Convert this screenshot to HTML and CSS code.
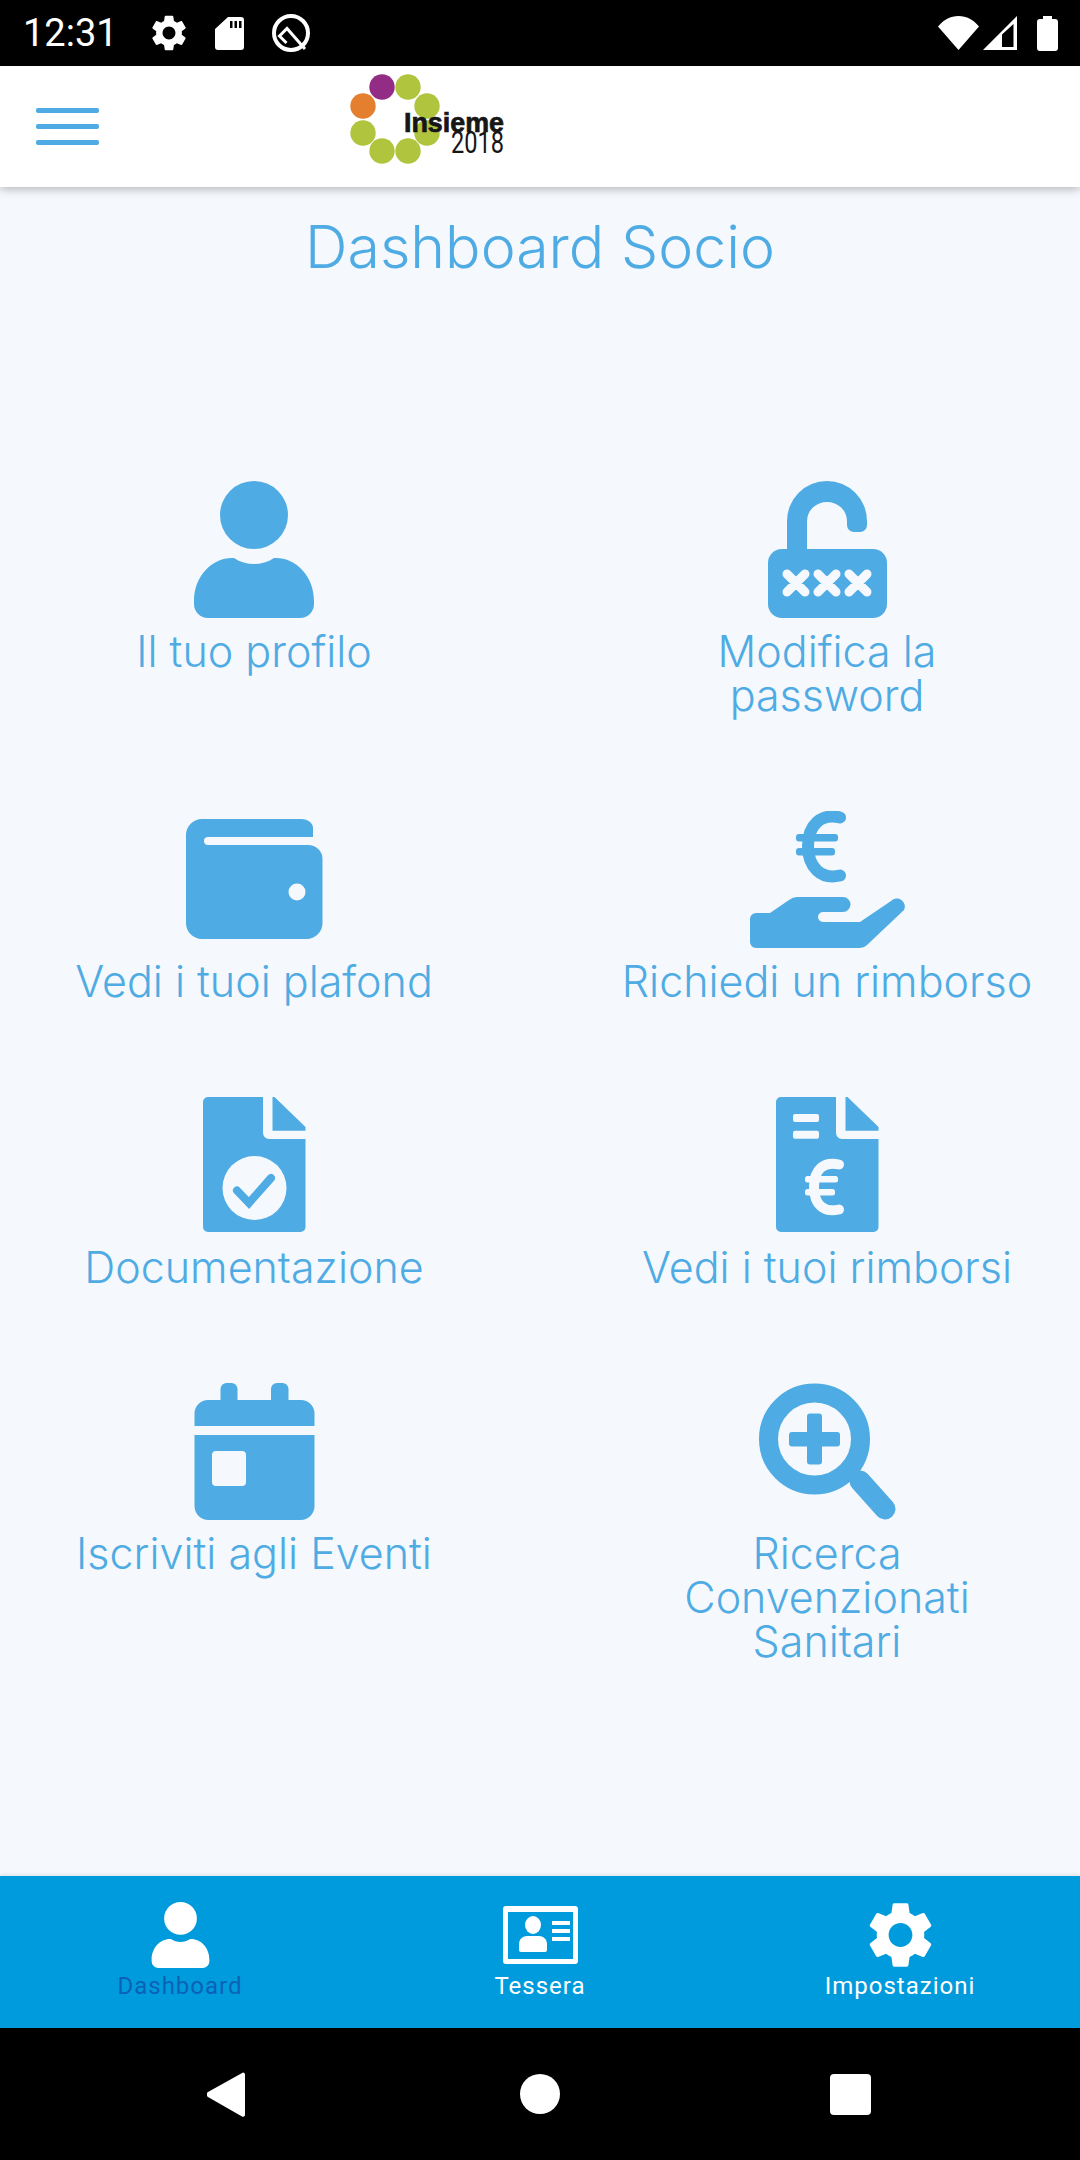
FILE: index.html
```html
<!DOCTYPE html>
<html lang="it">
<head>
    <meta charset="UTF-8">
    <meta name="viewport" content="width=device-width, initial-scale=1.0">
    <title>Dashboard Socio</title>
    <link rel="stylesheet" href="styles.css">
</head>
<body>
    <div class="telefono">
        <div class="barra-stato">
            <span class="ora">12:31</span>
            <svg class="st-gear" viewBox="2.5 2 19 20"><path fill="#fff" d="M19.14 12.94c.04-.3.06-.61.06-.94 0-.32-.02-.64-.07-.94l2.03-1.58c.18-.14.23-.41.12-.61l-1.92-3.32c-.12-.22-.37-.29-.59-.22l-2.39.96c-.5-.38-1.03-.7-1.62-.94l-.36-2.54c-.04-.24-.24-.41-.48-.41h-3.84c-.24 0-.43.17-.47.41l-.36 2.54c-.59.24-1.13.57-1.62.94l-2.39-.96c-.22-.08-.47 0-.59.22L2.74 8.87c-.12.21-.08.47.12.61l2.03 1.58c-.05.3-.09.63-.09.94s.02.64.07.94l-2.03 1.58c-.18.14-.23.41-.12.61l1.92 3.32c.12.22.37.29.59.22l2.39-.96c.5.38 1.03.7 1.62.94l.36 2.54c.05.24.24.41.48.41h3.84c.24 0 .44-.17.47-.41l.36-2.54c.59-.24 1.13-.56 1.62-.94l2.39.96c.22.08.47 0 .59-.22l1.92-3.32c.12-.22.07-.47-.12-.61l-2.01-1.58zM12 15.6c-1.98 0-3.6-1.62-3.6-3.6s1.62-3.6 3.6-3.6 3.6 1.62 3.6 3.6-1.62 3.6-3.6 3.6z"/></svg>
            <svg class="st-sd" viewBox="0 0 29 33"><path fill="#fff" fill-rule="evenodd" d="M13 0H26a3 3 0 0 1 3 3V30a3 3 0 0 1-3 3H3a3 3 0 0 1-3-3V12zM15 4v7h2.500V4zM19.500 4v7h2.500V4zM24 4v7h2.500V4z"/></svg>
            <svg class="st-q" viewBox="0 0 38 38"><circle cx="19" cy="19" r="17" fill="none" stroke="#fff" stroke-width="4"/><path fill="none" stroke="#fff" stroke-width="3" d="M14.500 29L7.500 22 15 14.500 33 35"/></svg>
            <div class="stato-destra">
                <svg class="st-wifi" viewBox="0 0 41 34"><path fill="#fff" d="M0 10.500C5.500 4 12.500 0 20.500 0S35.500 4 41 10.500L20.500 34z"/></svg>
                <svg class="st-signal" viewBox="0 0 34 34"><path fill="#fff" fill-rule="evenodd" d="M34 0V34H0zM30.500 8L19 18.500V31H30.500z"/></svg>
                <svg class="st-batt" viewBox="0 0 21 35"><path fill="#fff" d="M6 0H15V3H18a3 3 0 0 1 3 3V32a3 3 0 0 1-3 3H3a3 3 0 0 1-3-3V6a3 3 0 0 1 3-3H6z"/></svg>
            </div>
        </div>

        <header class="testata">
            <div class="hamburger"><span></span><span></span><span></span></div>
            <svg class="logo" viewBox="0 0 180 121">
                <circle cx="34" cy="21" r="12.700" fill="#932c84"/>
                <circle cx="60" cy="21" r="12.700" fill="#b0c43d"/>
                <circle cx="79" cy="40" r="12.700" fill="#b0c43d"/>
                <circle cx="15" cy="40" r="12.700" fill="#e47f2f"/>
                <circle cx="15" cy="67" r="12.700" fill="#b0c43d"/>
                <circle cx="34" cy="85" r="12.700" fill="#b0c43d"/>
                <circle cx="60" cy="85" r="12.700" fill="#b0c43d"/>
                <circle cx="79" cy="67" r="12.700" fill="#b0c43d"/>
                <text class="logo-nome" x="56" y="66" textLength="100" lengthAdjust="spacingAndGlyphs">Insieme</text>
                <text class="logo-anno" x="103" y="87" textLength="53" lengthAdjust="spacingAndGlyphs">2018</text>
            </svg>
        </header>

        <main class="contenuto">
            <h1>Dashboard Socio</h1>
            <div class="griglia">
                <div class="voce">
                    <svg class="icona" viewBox="0 0 160 137"><circle cx="80" cy="34" r="34"/><path d="M20 120c0-25 18-43 38-43h2c6 4 13 6 20 6s14-2 20-6h2c20 0 38 18 38 43v3a14 14 0 0 1-14 14H34a14 14 0 0 1-14-14z"/></svg>
                    <p>Il tuo profilo</p>
                </div>
                <div class="voce">
                    <svg class="icona" viewBox="0 0 160 137">
                        <path d="M40 70V40a40 40 0 0 1 80 0v4a7 7 0 0 1-7 7h-6a7 7 0 0 1-7-7v-4a20 19 0 0 0-40 0v30z"/>
                        <rect x="21" y="68" width="119" height="69" rx="14"/>
                        <path class="bianco-linea" stroke-width="9" d="M40 93l18 18M58 93l-18 18M71 93l18 18M89 93l-18 18M102 93l18 18M120 93l-18 18"/>
                    </svg>
                    <p>Modifica la<br>password</p>
                </div>
                <div class="voce">
                    <svg class="icona" viewBox="0 0 160 137">
                        <path d="M28 8H128a11 9 0 0 1 11 9V26H34a4 4 0 0 0 0 8H134a14.500 14 0 0 1 14.500 14V112a16 16 0 0 1-16 16H28a16 16 0 0 1-16-16V24a16 16 0 0 1 16-16z"/>
                        <circle class="bianco" cx="123" cy="81" r="8.500"/>
                    </svg>
                    <p>Vedi i tuoi plafond</p>
                </div>
                <div class="voce">
                    <svg class="icona" viewBox="0 0 160 137">
                        <path class="blu-linea" stroke-width="12" d="M93 6.500C74 2 61 14 61 35S74 69 93 64.500"/>
                        <rect x="49" y="23" width="42" height="7.500" rx="3"/>
                        <rect x="49" y="37" width="39" height="7.500" rx="3"/>
                        <path d="M3 108a6 6 0 0 1 6-6H23L42 89Q46 86 50 86H96a7.500 7.500 0 0 1 0 15H76a5 5 0 0 0 0 10H113L144 90a8 8 0 0 1 13 9L120 134Q117 137 113 137H9a6 6 0 0 1-6-6z"/>
                    </svg>
                    <p>Richiedi un rimborso</p>
                </div>
                <div class="voce">
                    <svg class="icona" viewBox="0 0 160 137">
                        <path d="M34 0H89V36a6 6 0 0 0 6 6H131.500V130a5 5 0 0 1-5 5H34a5 5 0 0 1-5-5V5a5 5 0 0 1 5-5z"/>
                        <path d="M98.500 0h2L131.500 30V33.700H98.500z"/>
                        <circle class="bianco" cx="80.500" cy="91" r="32"/>
                        <path class="blu-linea" stroke-width="8" stroke-linecap="butt" d="M63 93.500L75 106 97 81"/>
                    </svg>
                    <p>Documentazione</p>
                </div>
                <div class="voce">
                    <svg class="icona" viewBox="0 0 160 137">
                        <path d="M34 0H89V36a6 6 0 0 0 6 6H131.500V130a5 5 0 0 1-5 5H34a5 5 0 0 1-5-5V5a5 5 0 0 1 5-5z"/>
                        <path d="M98.500 0h2L131.500 30V33.700H98.500z"/>
                        <rect class="bianco" x="46" y="17" width="26" height="8" rx="2"/>
                        <rect class="bianco" x="46" y="33.700" width="26" height="8" rx="2"/>
                        <path class="bianco-linea" stroke-width="10" d="M92 67.500C77 64 67 72 67 90S77 116 92 112.500"/>
                        <rect class="bianco" x="58" y="79" width="33" height="6.500" rx="2.500"/>
                        <rect class="bianco" x="58" y="92" width="30" height="6.500" rx="2.500"/>
                    </svg>
                    <p>Vedi i tuoi rimborsi</p>
                </div>
                <div class="voce">
                    <svg class="icona" viewBox="0 0 160 137">
                        <rect x="46.500" y="0" width="17" height="30" rx="6"/>
                        <rect x="97" y="0" width="17.500" height="30" rx="6"/>
                        <path d="M34 17H127a13.500 13.500 0 0 1 13.500 13.500V43H20.500V30.500A13.500 13.500 0 0 1 34 17z"/>
                        <path fill-rule="evenodd" d="M20.500 52H140.500V123a14 14 0 0 1-14 14H34.500a14 14 0 0 1-14-14zM42 68a4 4 0 0 0-4 4V99a4 4 0 0 0 4 4H68a4 4 0 0 0 4-4V72a4 4 0 0 0-4-4z"/>
                    </svg>
                    <p>Iscriviti agli Eventi</p>
                </div>
                <div class="voce">
                    <svg class="icona" viewBox="0 0 160 137">
                        <circle class="blu-linea" stroke-width="19" cx="67.500" cy="56" r="46"/>
                        <path class="blu-linea" stroke-width="21" d="M113 98L138 126"/>
                        <rect x="60" y="30.500" width="15" height="51" rx="3"/>
                        <rect x="42" y="49" width="51" height="14.500" rx="3"/>
                    </svg>
                    <p>Ricerca<br>Convenzionati<br>Sanitari</p>
                </div>
            </div>
        </main>

        <nav class="menu-basso">
            <div class="tab attiva">
                <svg class="tab-icona" viewBox="0 0 160 137"><circle cx="80" cy="34" r="34"/><path d="M20 120c0-25 18-43 38-43h2c6 4 13 6 20 6s14-2 20-6h2c20 0 38 18 38 43v3a14 14 0 0 1-14 14H34a14 14 0 0 1-14-14z"/></svg>
                <span>Dashboard</span>
            </div>
            <div class="tab">
                <svg class="tab-icona" viewBox="0 0 77 66">
                    <path fill-rule="evenodd" d="M4 4H73a3 3 0 0 1 3 3V59a3 3 0 0 1-3 3H4a3 3 0 0 1-3-3V7a3 3 0 0 1 3-3zM6 10V57H71V10z"/>
                    <ellipse cx="31" cy="23" rx="8" ry="9"/>
                    <path d="M17 48V42c0-5 4-8 8-8h12c4 0 8 3 8 8v6a2 2 0 0 1-2 2H19a2 2 0 0 1-2-2z"/>
                    <rect x="50" y="19" width="18" height="4"/>
                    <rect x="50" y="27" width="18" height="4"/>
                    <rect x="50" y="35" width="18" height="4"/>
                </svg>
                <span>Tessera</span>
            </div>
            <div class="tab">
                <svg class="tab-icona" viewBox="2.500 2 19 20"><path d="M19.14 12.94c.04-.3.06-.61.06-.94 0-.32-.02-.64-.07-.94l2.03-1.58c.18-.14.23-.41.12-.61l-1.92-3.32c-.12-.22-.37-.29-.59-.22l-2.39.96c-.5-.38-1.03-.7-1.62-.94l-.36-2.54c-.04-.24-.24-.41-.48-.41h-3.84c-.24 0-.43.17-.47.41l-.36 2.54c-.59.24-1.13.57-1.62.94l-2.39-.96c-.22-.08-.47 0-.59.22L2.74 8.87c-.12.21-.08.47.12.61l2.03 1.58c-.05.3-.09.63-.09.94s.02.64.07.94l-2.03 1.58c-.18.14-.23.41-.12.61l1.92 3.32c.12.22.37.29.59.22l2.39-.96c.5.38 1.03.7 1.62.94l.36 2.54c.05.24.24.41.48.41h3.84c.24 0 .44-.17.47-.41l.36-2.54c.59-.24 1.13-.56 1.62-.94l2.39.96c.22.08.47 0 .59-.22l1.92-3.32c.12-.22.07-.47-.12-.61l-2.01-1.58zM12 15.6c-1.98 0-3.6-1.62-3.6-3.6s1.62-3.6 3.6-3.6 3.6 1.62 3.6 3.6-1.62 3.6-3.6 3.6z"/></svg>
                <span>Impostazioni</span>
            </div>
        </nav>

        <div class="barra-sistema">
            <svg class="sis-back" viewBox="0 0 38 45"><path fill="#fff" d="M36 .5a2 2 0 0 1 2 1.500V43a2 2 0 0 1-3 1.500L1 25a3 3 0 0 1 0-5z"/></svg>
            <svg class="sis-home" viewBox="0 0 40 40"><circle cx="20" cy="20" r="20" fill="#fff"/></svg>
            <svg class="sis-recent" viewBox="0 0 41 41"><rect width="41" height="41" rx="4" fill="#fff"/></svg>
        </div>
    </div>
</body>
</html>
```

FILE: styles.css
```css
* {
    margin: 0;
    padding: 0;
    box-sizing: border-box;
}
body {
    background-color: #000;
    font-family: 'Inter', 'Lato', sans-serif;
}
.telefono {
    width: 1080px;
    height: 2160px;
    display: flex;
    flex-direction: column;
    overflow: hidden;
    background-color: #f5f8fc;
}

/* barra di stato */
.barra-stato {
    height: 66px;
    flex: none;
    background-color: #000;
    color: #fff;
    display: flex;
    align-items: center;
    padding-left: 23px;
    font-family: 'Roboto', sans-serif;
}
.ora {
    font-size: 38px;
    width: 129px;
}
.st-gear {
    width: 34px;
    height: 36px;
}
.st-sd {
    width: 29px;
    height: 33px;
    margin-left: 29px;
}
.st-q {
    width: 38px;
    height: 38px;
    margin-left: 28px;
}
.stato-destra {
    margin-left: auto;
    padding-right: 22px;
    display: flex;
    align-items: center;
}
.st-wifi {
    width: 41px;
    height: 34px;
}
.st-signal {
    width: 34px;
    height: 34px;
    margin-left: 4px;
}
.st-batt {
    width: 21px;
    height: 35px;
    margin-left: 20px;
}

/* testata */
.testata {
    height: 121px;
    flex: none;
    background-color: #fff;
    display: flex;
    align-items: center;
    padding-left: 36px;
    box-shadow: 0 2px 9px rgba(0, 0, 0, 0.28);
    position: relative;
}
.hamburger {
    width: 63px;
    display: flex;
    flex-direction: column;
    gap: 11px;
}
.hamburger span {
    height: 5px;
    border-radius: 2px;
    background-color: #4fabe3;
}
.logo {
    width: 180px;
    height: 121px;
    margin-left: 249px;
}
.logo-nome {
    font-family: 'Liberation Sans', sans-serif;
    font-weight: bold;
    font-size: 27px;
    fill: #161616;
    stroke: #161616;
    stroke-width: 0.7px;
}
.logo-anno {
    font-family: 'Roboto', sans-serif;
    font-size: 31px;
    fill: #161616;
}

/* contenuto */
.contenuto {
    flex: 1;
    padding-top: 25px;
    color: #4fabe3;
    text-align: center;
}
.contenuto h1 {
    font-weight: 300;
    font-size: 59px;
    line-height: 70px;
}
.griglia {
    margin: 199px 14px 0 15px;
    display: grid;
    grid-template-columns: 478px 478px;
    column-gap: 95px;
    row-gap: 95px;
    align-items: start;
}
.voce p {
    margin-top: 11px;
    font-size: 43px;
    font-weight: 300;
    line-height: 44px;
}
.voce {
    margin-bottom: -1px;
}
.icona {
    display: block;
    width: 160px;
    height: 137px;
    margin: 0 auto;
    fill: #4fabe3;
}
.bianco {
    fill: #f5f8fc;
}
.bianco-linea {
    fill: none;
    stroke: #f5f8fc;
    stroke-linecap: round;
}
.blu-linea {
    fill: none;
    stroke: #4fabe3;
    stroke-linecap: round;
    stroke-linejoin: miter;
}

/* menu in basso */
.menu-basso {
    height: 152px;
    flex: none;
    background-color: #009bdd;
    display: grid;
    grid-template-columns: repeat(3, 1fr);
    padding-top: 26px;
    box-shadow: 0 -2px 3px rgba(0, 0, 0, 0.07);
    font-family: 'Roboto', sans-serif;
}
.tab {
    display: flex;
    flex-direction: column;
    align-items: center;
    color: #fff;
    font-size: 24px;
    letter-spacing: 1px;
}
.tab-icona {
    width: 77px;
    height: 66px;
    fill: #fff;
    margin-bottom: 4px;
}
.tab span {
    line-height: 28px;
}
.tab.attiva {
    color: #0b62b5;
}

/* barra di sistema */
.barra-sistema {
    height: 132px;
    flex: none;
    background-color: #000;
    display: flex;
    align-items: center;
    padding-left: 207px;
}
.sis-back {
    width: 38px;
    height: 45px;
}
.sis-home {
    width: 40px;
    height: 40px;
    margin-left: 275px;
}
.sis-recent {
    width: 41px;
    height: 41px;
    margin-left: 270px;
}
```
